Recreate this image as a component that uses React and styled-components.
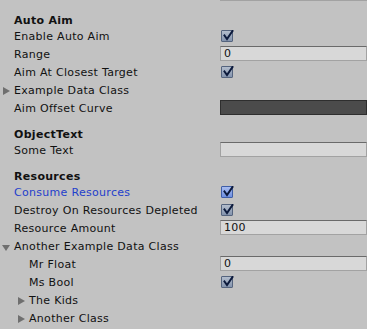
import styled, { createGlobalStyle } from "styled-components";

const GlobalStyle = createGlobalStyle`
  html, body {
    margin: 0;
    padding: 0;
    background: #c2c2c2;
    overflow: hidden;
  }
`;

const rows = [
  { kind: "text", label: "", value: "" },
  { kind: "header", label: "Auto Aim" },
  { kind: "check", label: "Enable Auto Aim" },
  { kind: "text", label: "Range", value: "0" },
  { kind: "check", label: "Aim At Closest Target" },
  { kind: "none", label: "Example Data Class", fold: "closed" },
  { kind: "curve", label: "Aim Offset Curve" },
  { kind: "header", label: "ObjectText" },
  { kind: "text", label: "Some Text", value: "" },
  { kind: "header", label: "Resources" },
  { kind: "check", label: "Consume Resources", modified: true },
  { kind: "check", label: "Destroy On Resources Depleted" },
  { kind: "text", label: "Resource Amount", value: "100" },
  { kind: "none", label: "Another Example Data Class", fold: "open" },
  { kind: "text", label: "Mr Float", value: "0", indent: 1 },
  { kind: "check", label: "Ms Bool", indent: 1 },
  { kind: "none", label: "The Kids", fold: "closed", indent: 1 },
  { kind: "none", label: "Another Class", fold: "closed", indent: 1 },
];

function Arrow({ open }) {
  if (open) {
    return (
      <svg width="12" height="16" viewBox="0 0 12 16">
        <polygon points="0,7 8,7 4,13" fill="#6f6f6f" />
      </svg>
    );
  }
  return (
    <svg width="12" height="16" viewBox="0 0 12 16">
      <polygon points="1,5 8,9 1,13" fill="#6f6f6f" />
    </svg>
  );
}

function Check({ active }) {
  return (
    <CheckBox $active={active}>
      <svg width="12" height="12" viewBox="0 0 12 12">
        <path
          d="M2.5 5.5 L5 9 L10.5 1"
          fill="none"
          stroke="#0c1a3c"
          strokeWidth="2"
          strokeLinecap="square"
        />
      </svg>
    </CheckBox>
  );
}

function Value({ row }) {
  if (row.kind === "check") return <Check active={row.modified} />;
  if (row.kind === "text") return <TextField>{row.value}</TextField>;
  if (row.kind === "curve") return <CurveField />;
  return null;
}

export default function App() {
  return (
    <Page>
      <GlobalStyle />
      <Panel>
        {rows.map((row, i) =>
          row.kind === "header" ? (
            <Header key={i}>{row.label}</Header>
          ) : (
            <Row key={i}>
              <LabelCell $indent={row.indent || 0}>
                <ArrowSlot>{row.fold && <Arrow open={row.fold === "open"} />}</ArrowSlot>
                <Label $modified={row.modified}>{row.label}</Label>
              </LabelCell>
              <ValueCell>
                <Value row={row} />
              </ValueCell>
            </Row>
          )
        )}
      </Panel>
    </Page>
  );
}

const Page = styled.div`
  width: 367px;
  height: 329px;
  overflow: hidden;
  background: #c2c2c2;
  font-family: "DejaVu Sans", Verdana, sans-serif;
  font-size: 11px;
  letter-spacing: 0.3px;
  color: #111;
`;

const Panel = styled.div`
  display: flex;
  flex-direction: column;
  margin-top: -15px;
`;

const Row = styled.div`
  display: flex;
  height: 16px;
  margin-bottom: 2px;
`;

const Header = styled.div`
  height: 16px;
  margin-top: 6px;
  margin-bottom: 2px;
  padding: 4px 0 0 14px;
  box-sizing: border-box;
  line-height: 16px;
  font-weight: bold;
`;

const LabelCell = styled.div`
  width: 220px;
  flex-shrink: 0;
  display: flex;
  padding-left: ${(p) => 2 + p.$indent * 15}px;
  box-sizing: border-box;
  white-space: nowrap;
`;

const ArrowSlot = styled.div`
  width: 12px;
  height: 16px;
  flex-shrink: 0;
  margin-top: 1px;
`;

const Label = styled.span`
  line-height: 16px;
  padding-top: 2px;
  color: ${(p) => (p.$modified ? "#1f3fcc" : "#111")};
`;

const ValueCell = styled.div`
  flex: 1;
  display: flex;
  min-width: 0;
`;

const TextField = styled.div`
  margin-top: 1px;
  height: 15px;
  width: 100%;
  box-sizing: border-box;
  background: #d8d8d8;
  border: 1px solid #a2a2a2;
  border-top-color: #6a6a6a;
  padding-left: 3px;
  line-height: 14px;
  color: #111;
`;

const CurveField = styled.div`
  margin-top: 1px;
  height: 15px;
  width: 100%;
  box-sizing: border-box;
  background: #4b4b4b;
  border: 1px solid #2e2e2e;
`;

const CheckBox = styled.div`
  margin: 3px 0 0 1px;
  width: 12px;
  height: 12px;
  box-sizing: border-box;
  border: 1px solid ${(p) => (p.$active ? "#3f5ea8" : "#55647e")};
  border-radius: 1px;
  background: ${(p) =>
    p.$active
      ? "linear-gradient(#a8bcf0, #6e8fe0)"
      : "linear-gradient(#b3bdcc, #8393ad)"};
  display: flex;
  align-items: center;
  justify-content: center;

  & svg {
    margin: -1px -2px 0 0;
  }
`;
